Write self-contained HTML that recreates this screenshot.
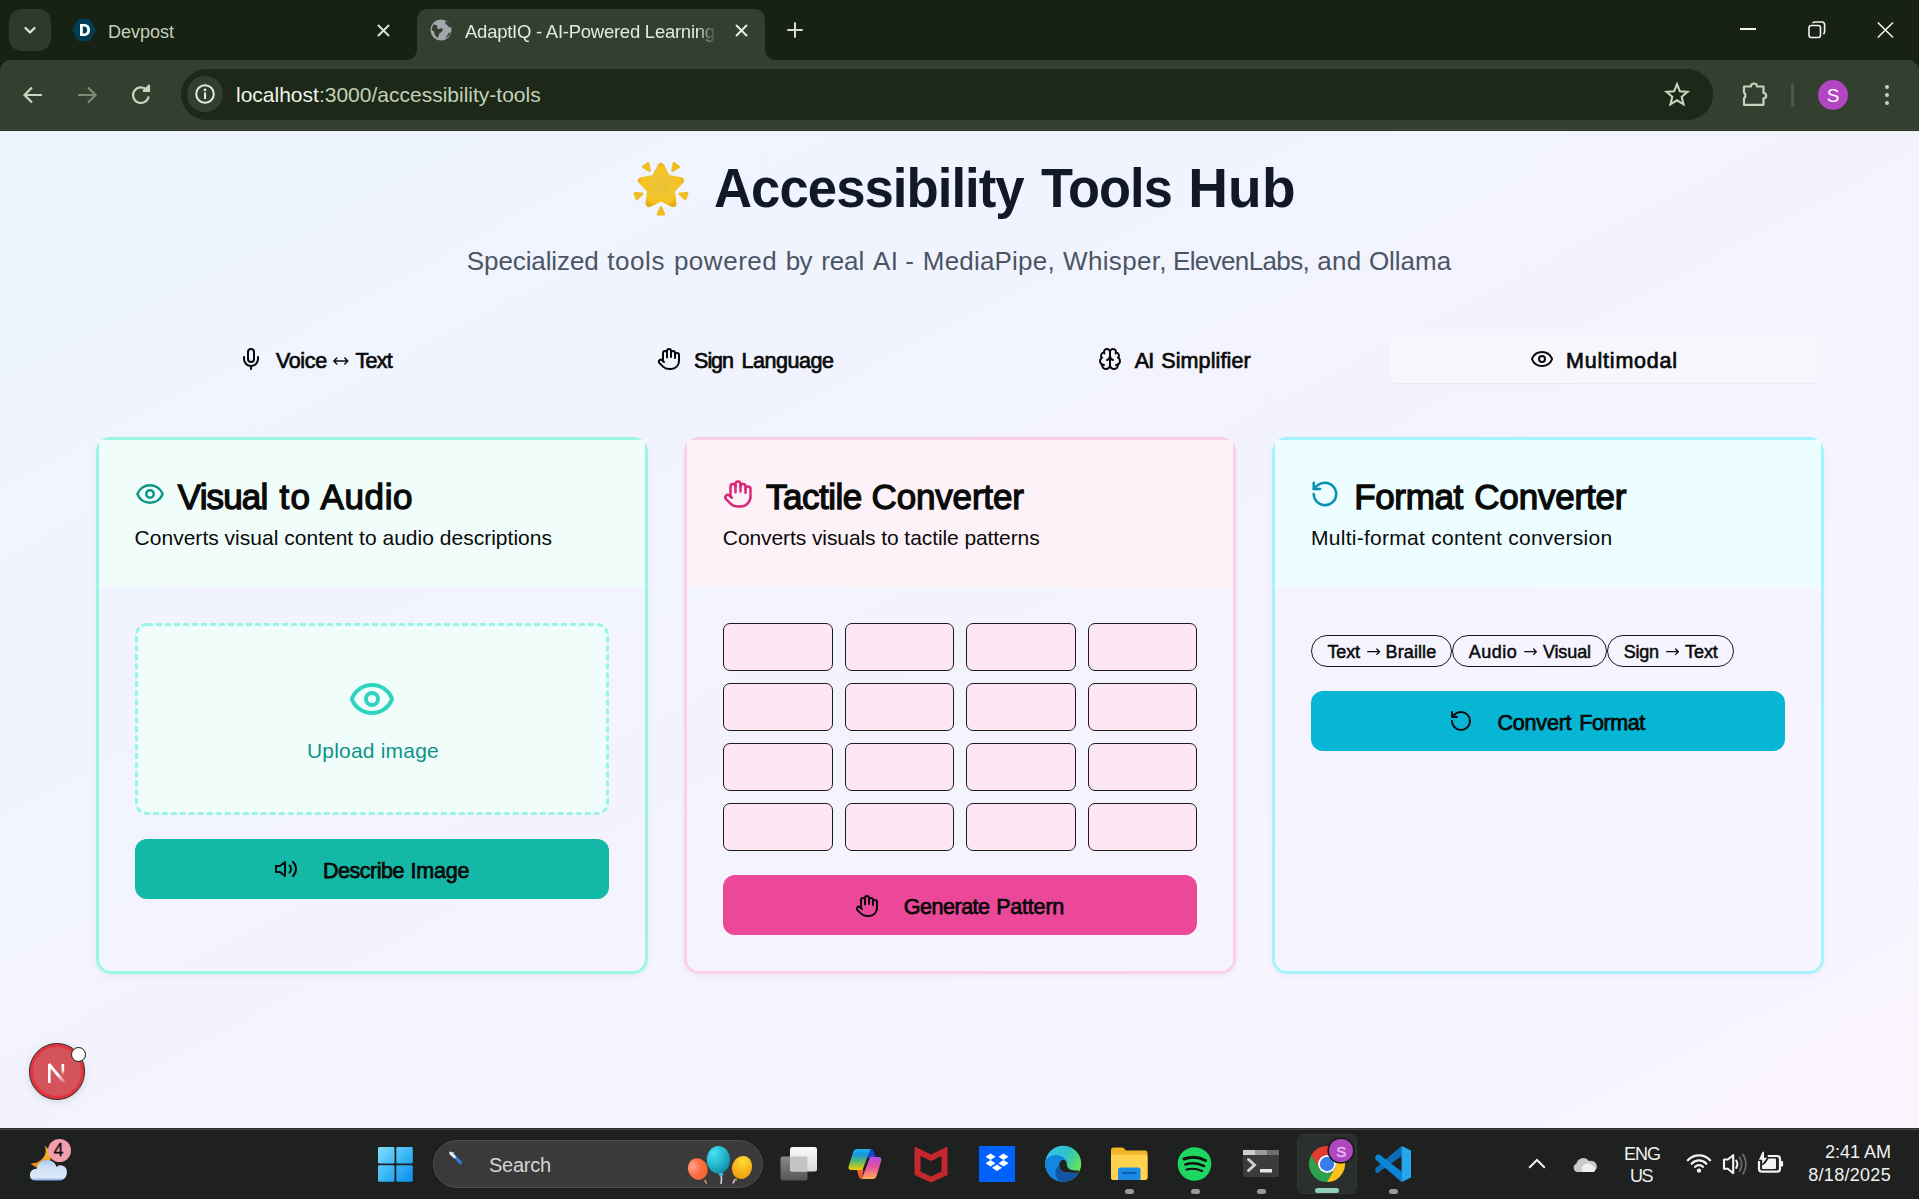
<!DOCTYPE html>
<html><head><meta charset="utf-8">
<style>
*{margin:0;padding:0;box-sizing:border-box}
html,body{width:1919px;height:1199px;overflow:hidden}
body{position:relative;font-family:"Liberation Sans",sans-serif;background:#182214}
.a{position:absolute}
.t{position:absolute;white-space:nowrap;line-height:1}
svg{position:absolute;overflow:visible}
/* chrome */
#strip{left:0;top:0;width:1919px;height:60px;background:#182214}
#toolbar{left:0;top:60px;width:1919px;height:69px;background:#333f2f;border-radius:11px 11px 0 0}
#tbline{left:0;top:129px;width:1919px;height:1px;background:#454a40}
#tbdark{left:0;top:130px;width:1919px;height:1px;background:#27301f}
#omni{left:181px;top:69px;width:1532px;height:51px;background:#1d2818;border-radius:26px}
/* content */
#page{left:0;top:131px;width:1919px;height:997px;background:linear-gradient(to bottom right,#edf5ff 0%,#f3f3fe 50%,#faf5ff 100%);overflow:hidden}
/* taskbar */
#taskbar{left:0;top:1128px;width:1919px;height:71px;background:#1f2120;border-top:1px solid #2f302f;box-shadow:inset 0 1px 0 #434443}
</style></head><body>
<div id="strip" class="a"></div>
<div id="toolbar" class="a"></div>
<div id="tbline" class="a"></div>
<div id="tbdark" class="a"></div>
<div id="omni" class="a"></div>

<!-- tab search button -->
<div class="a" style="left:9px;top:9px;width:42px;height:42px;border-radius:13px;background:#2e3a2b"></div>
<svg style="left:22px;top:22px" width="16" height="16" viewBox="0 0 16 16"><path d="M3.5 6 L8 10.5 L12.5 6" fill="none" stroke="#dfe8d9" stroke-width="2.2" stroke-linecap="round" stroke-linejoin="round"/></svg>
<!-- devpost favicon -->
<svg style="left:72px;top:19px" width="24" height="22" viewBox="0 0 24 22"><polygon points="6,0 18,0 24,11 18,22 6,22 0,11" fill="#003e54"/><path d="M8 5h4.2c3.6 0 5.8 2.3 5.8 6s-2.2 6-5.8 6H8Z M10.8 7.6v6.8h1.3c2 0 3.1-1.3 3.1-3.4s-1.1-3.4-3.1-3.4Z" fill="#fff" fill-rule="evenodd"/></svg>
<div class="t" style="left:108px;top:23px;font-size:18px;color:#c3d0b9">Devpost</div>
<svg style="left:377px;top:24px" width="13" height="13" viewBox="0 0 13 13"><path d="M1.5 1.5L11.5 11.5M11.5 1.5L1.5 11.5" stroke="#d9e3d3" stroke-width="2" stroke-linecap="round"/></svg>
<!-- active tab -->
<svg style="left:405px;top:9px" width="372" height="52" viewBox="0 0 372 52"><path d="M0 51 Q12 51 12 39 V12 Q12 0 24 0 H348 Q360 0 360 12 V39 Q360 51 372 51 Z" fill="#333f2f"/></svg>
<svg style="left:430px;top:19px" width="22" height="22" viewBox="0 0 22 22"><circle cx="11" cy="11" r="10.5" fill="#a2a6ad"/><path d="M4 5.5c2 0 3.5 1 3.2 2.8-.3 1.6 1.6 2.2 2.8 1.4 1.3-.9 2.9-.2 2.6 1.5-.3 1.7-2 2-3.2 3.3-1 1.1-.6 3-1.4 4.2-1.8-.5-3.8-2.8-3.6-4.6.2-1.6-1.3-2.3-2.6-2.8C2 8.5 2.6 6.3 4 5.5Z M15.5 2.2c-.8 1.2-.3 2.7 1 3.2 1.6.6 1.4 2.3 2.8 2.8.8.3 1.4.1 2-.3-.5-2.5-3.2-5.2-5.8-5.7Z M20.8 13.5c-1.4-.4-2.6.5-3 1.9-.4 1.5-2 2.2-2.4 3.6 2.6-.9 4.8-3 5.4-5.5Z" fill="#333f2f"/></svg>
<div class="t" style="left:465px;top:23px;font-size:18.5px;letter-spacing:-0.25px;color:#e3eadf;width:252px;overflow:hidden;-webkit-mask-image:linear-gradient(90deg,#000 232px,transparent 252px)">AdaptIQ - AI-Powered Learning Platform</div>
<svg style="left:735px;top:24px" width="13" height="13" viewBox="0 0 13 13"><path d="M1.5 1.5L11.5 11.5M11.5 1.5L1.5 11.5" stroke="#e6ede1" stroke-width="2" stroke-linecap="round"/></svg>
<svg style="left:787px;top:22px" width="16" height="16" viewBox="0 0 16 16"><path d="M8 1V15M1 8H15" stroke="#d4ddce" stroke-width="2" stroke-linecap="round"/></svg>
<!-- window controls -->
<div class="a" style="left:1740px;top:28px;width:16px;height:1.6px;background:#f2f2f2"></div>
<svg style="left:1808px;top:21px" width="18" height="18" viewBox="0 0 18 18"><rect x="1" y="4.5" width="11.5" height="12" rx="2.2" fill="none" stroke="#f2f2f2" stroke-width="1.6"/><path d="M4.5 2.2 Q5.2 1 7 1 H13.8 Q16.6 1 16.6 3.8 V10.5 Q16.6 12.3 15.4 13" fill="none" stroke="#f2f2f2" stroke-width="1.6"/></svg>
<svg style="left:1877px;top:22px" width="17" height="16" viewBox="0 0 17 16"><path d="M0.8 0.5L16 15.5M16 0.5L0.8 15.5" stroke="#f2f2f2" stroke-width="1.6"/></svg>
<!-- nav buttons -->
<svg style="left:22px;top:84px" width="22" height="22" viewBox="0 0 22 22"><path d="M20 11H3M10 3.5L2.5 11L10 18.5" fill="none" stroke="#c7d4be" stroke-width="2.2" stroke-linejoin="miter"/></svg>
<svg style="left:76px;top:84px" width="22" height="22" viewBox="0 0 22 22"><path d="M2 11H19M12 3.5L19.5 11L12 18.5" fill="none" stroke="#7e8c77" stroke-width="2.2"/></svg>
<svg style="left:130px;top:84px" width="22" height="22" viewBox="0 0 22 22"><path d="M18.6 12.3A7.8 7.8 0 1 1 16.4 5.6" fill="none" stroke="#c7d4be" stroke-width="2.2"/><path d="M12.2 6.8H19V0.2Z" fill="#c7d4be"/><path d="M19 0.8V6.8H13" fill="none" stroke="#c7d4be" stroke-width="2.2"/></svg>
<!-- info chip -->
<div class="a" style="left:187px;top:76px;width:36px;height:36px;border-radius:50%;background:#333f2f"></div>
<svg style="left:195px;top:84px" width="20" height="20" viewBox="0 0 20 20"><circle cx="10" cy="10" r="8.8" fill="none" stroke="#e3eadf" stroke-width="2"/><rect x="9" y="8.5" width="2.1" height="6.5" fill="#e3eadf"/><circle cx="10" cy="5.9" r="1.3" fill="#e3eadf"/></svg>
<div class="t" style="left:236px;top:84px;font-size:21px;color:#c3d0b9"><span style="color:#eef3ea">localhost</span>:3000/accessibility-tools</div>
<!-- right toolbar -->
<svg style="left:1664px;top:82px" width="26" height="25" viewBox="0 0 26 25"><path d="M13 2.2L15.9 9.3L23.5 9.9L17.7 14.8L19.5 22.3L13 18.3L6.5 22.3L8.3 14.8L2.5 9.9L10.1 9.3Z" fill="none" stroke="#c7d4be" stroke-width="2.1" stroke-linejoin="miter"/></svg>
<svg style="left:1740px;top:80px" width="28" height="28" viewBox="0 0 28 28"><path d="M4 6.5H11A3 3 0 0 1 17 6.5H23.5V13A2.6 2.6 0 0 1 23.5 18.3V24.8H4V18.3A3.5 3.5 0 0 0 4 12.7Z" fill="none" stroke="#c7d4be" stroke-width="2.2" stroke-linejoin="round"/></svg>
<div class="a" style="left:1791px;top:83px;width:3px;height:24px;background:#4b5a47;border-radius:1.5px"></div>
<div class="a" style="left:1818px;top:80px;width:30px;height:30px;border-radius:50%;background:#b245c1"></div>
<div class="t" style="left:1818px;top:86px;width:30px;text-align:center;font-size:19px;color:#fff">S</div>
<div class="a" style="left:1884.5px;top:84.5px;width:4.6px;height:4.6px;border-radius:50%;background:#c7d4be"></div>
<div class="a" style="left:1884.5px;top:92.5px;width:4.6px;height:4.6px;border-radius:50%;background:#c7d4be"></div>
<div class="a" style="left:1884.5px;top:100.8px;width:4.6px;height:4.6px;border-radius:50%;background:#c7d4be"></div>

<div id="page" class="a"></div>
<svg style="left:0;top:0" width="1919" height="300"><defs><radialGradient id="sg" cx="0.5" cy="0.5" r="0.6"><stop offset="0" stop-color="#e6bf3a"/><stop offset="0.55" stop-color="#f2c42e"/><stop offset="0.85" stop-color="#f5c21f"/><stop offset="1" stop-color="#e9a81a"/></radialGradient></defs><path d="M661.0 166.5 L667.3 178.3 L680.5 180.7 L671.3 190.3 L673.0 203.6 L661.0 197.8 L649.0 203.6 L650.7 190.3 L641.5 180.7 L654.7 178.3Z" fill="url(#sg)" stroke="url(#sg)" stroke-width="7" stroke-linejoin="round"/><path d="M649.5 170.6 L648.1 163.3 L643.2 166.8Z" fill="#efbd22" stroke="#efbd22" stroke-width="2.6" stroke-linejoin="round"/><path d="M672.5 170.6 L678.8 166.8 L673.9 163.3Z" fill="#efbd22" stroke="#efbd22" stroke-width="2.6" stroke-linejoin="round"/><path d="M642.2 193.8 L634.8 193.3 L636.8 199.0Z" fill="#efbd22" stroke="#efbd22" stroke-width="2.6" stroke-linejoin="round"/><path d="M679.8 193.8 L685.2 199.0 L687.2 193.3Z" fill="#efbd22" stroke="#efbd22" stroke-width="2.6" stroke-linejoin="round"/><path d="M661.0 207.5 L658.0 214.3 L664.0 214.3Z" fill="#efbd22" stroke="#efbd22" stroke-width="2.6" stroke-linejoin="round"/></svg>
<div class="t" style="left:714.0px;top:161px;font-size:55px;letter-spacing:-1.000px;font-weight:bold;color:#111827;transform:scaleX(0.958);transform-origin:0 0;">Accessibility</div>
<div class="t" style="left:1041.0px;top:161px;font-size:55px;letter-spacing:-1.000px;font-weight:bold;color:#111827;transform:scaleX(0.951);transform-origin:0 0;">Tools</div>
<div class="t" style="left:1188.2px;top:161px;font-size:55px;letter-spacing:0.217px;font-weight:bold;color:#111827;">Hub</div>
<div class="t" style="left:466.8px;top:248px;font-size:26px;letter-spacing:-0.101px;color:#4b5563;">Specialized</div>
<div class="t" style="left:607.3px;top:248px;font-size:26px;letter-spacing:0.545px;color:#4b5563;">tools</div>
<div class="t" style="left:673.9px;top:248px;font-size:26px;letter-spacing:0.521px;color:#4b5563;">powered</div>
<div class="t" style="left:785.7px;top:248px;font-size:26px;letter-spacing:-0.660px;color:#4b5563;">by</div>
<div class="t" style="left:821.2px;top:248px;font-size:26px;letter-spacing:-0.126px;color:#4b5563;">real</div>
<div class="t" style="left:873.0px;top:248px;font-size:26px;letter-spacing:0.358px;color:#4b5563;">AI</div>
<div class="t" style="left:905.2px;top:248px;font-size:26px;letter-spacing:0.000px;color:#4b5563;">-</div>
<div class="t" style="left:922.8px;top:248px;font-size:26px;letter-spacing:0.194px;color:#4b5563;">MediaPipe,</div>
<div class="t" style="left:1063.0px;top:248px;font-size:26px;letter-spacing:0.340px;color:#4b5563;">Whisper,</div>
<div class="t" style="left:1173.0px;top:248px;font-size:26px;letter-spacing:-0.638px;color:#4b5563;">ElevenLabs,</div>
<div class="t" style="left:1317.2px;top:248px;font-size:26px;letter-spacing:0.340px;color:#4b5563;">and</div>
<div class="t" style="left:1368.9px;top:248px;font-size:26px;letter-spacing:-0.019px;color:#4b5563;">Ollama</div>
<div class="a" style="left:1389px;top:335px;width:429px;height:48px;border-radius:6px;background:#f6f6fd;box-shadow:0 1px 2px rgba(0,0,0,0.05)"></div>
<svg style="left:238.7px;top:346.7px" width="24" height="24" viewBox="0 0 24 24" fill="none" stroke="#0a0a0a" stroke-width="2" stroke-linecap="round" stroke-linejoin="round"><path d="M12 2a3 3 0 0 0-3 3v7a3 3 0 0 0 6 0V5a3 3 0 0 0-3-3Z"/><path d="M19 10v2a7 7 0 0 1-14 0v-2"/><line x1="12" x2="12" y1="19" y2="22"/></svg>
<div class="t" style="left:276.0px;top:351px;font-size:21.5px;letter-spacing:-0.370px;-webkit-text-stroke:0.7px #0a0a0a;color:#0a0a0a;">Voice</div>
<svg style="left:333.0px;top:357.3px" width="15.5" height="8.0" fill="none" stroke="#0a0a0a" stroke-width="1.5" stroke-linecap="round" stroke-linejoin="round"><path d="M0.8 4.0 H14.8 M11.8 1 L14.8 4.0 L11.8 7.0 M3.8 1 L0.8 4.0 L3.8 7.0"/></svg>
<div class="t" style="left:355.5px;top:351px;font-size:21.5px;letter-spacing:-0.750px;-webkit-text-stroke:0.7px #0a0a0a;color:#0a0a0a;">Text</div>
<svg style="left:657.2px;top:347.0px" width="24" height="24" viewBox="0 0 24 24" fill="none" stroke="#0a0a0a" stroke-width="2" stroke-linecap="round" stroke-linejoin="round"><path d="M18 11V6a2 2 0 0 0-2-2a2 2 0 0 0-2 2"/><path d="M14 10V4a2 2 0 0 0-2-2a2 2 0 0 0-2 2v2"/><path d="M10 10.5V6a2 2 0 0 0-2-2a2 2 0 0 0-2 2v8"/><path d="M18 8a2 2 0 1 1 4 0v6a8 8 0 0 1-8 8h-2c-2.8 0-4.5-.86-5.99-2.34l-3.6-3.6a2 2 0 0 1 2.830-2.820L7 15"/></svg>
<div class="t" style="left:694.1px;top:351px;font-size:21.5px;letter-spacing:-1.058px;-webkit-text-stroke:0.7px #0a0a0a;color:#0a0a0a;">Sign</div>
<div class="t" style="left:741.5px;top:351px;font-size:21.5px;letter-spacing:-0.457px;-webkit-text-stroke:0.7px #0a0a0a;color:#0a0a0a;">Language</div>
<svg style="left:1098.4px;top:347.0px" width="24" height="24" viewBox="0 0 24 24" fill="none" stroke="#0a0a0a" stroke-width="2" stroke-linecap="round" stroke-linejoin="round"><path d="M12 5a3 3 0 1 0-5.997.125 4 4 0 0 0-2.526 5.77 4 4 0 0 0 .556 6.588A4 4 0 1 0 12 18Z"/><path d="M12 5a3 3 0 1 1 5.997.125 4 4 0 0 1 2.526 5.77 4 4 0 0 1-.556 6.588A4 4 0 1 1 12 18Z"/><path d="M15 13a4.5 4.5 0 0 1-3-4 4.5 4.5 0 0 1-3 4"/><path d="M17.599 6.5a3 3 0 0 0 .399-1.375"/><path d="M6.003 5.125A3 3 0 0 0 6.401 6.5"/><path d="M3.477 10.896a4 4 0 0 1 .585-.396"/><path d="M19.938 10.5a4 4 0 0 1 .585.396"/><path d="M6 18a4 4 0 0 1-1.967-.516"/><path d="M19.967 17.484A4 4 0 0 1 18 18"/></svg>
<div class="t" style="left:1134.7px;top:351px;font-size:21.5px;letter-spacing:-0.840px;-webkit-text-stroke:0.7px #0a0a0a;color:#0a0a0a;">AI</div>
<div class="t" style="left:1161.2px;top:351px;font-size:21.5px;letter-spacing:0.128px;-webkit-text-stroke:0.7px #0a0a0a;color:#0a0a0a;">Simplifier</div>
<svg style="left:1530.0px;top:347.3px" width="24" height="24" viewBox="0 0 24 24" fill="none" stroke="#0a0a0a" stroke-width="2" stroke-linecap="round" stroke-linejoin="round"><path d="M2.062 12.348a1 1 0 0 1 0-.696 10.75 10.75 0 0 1 19.876 0 1 1 0 0 1 0 .696 10.75 10.75 0 0 1-19.876 0"/><circle cx="12" cy="12" r="3"/></svg>
<div class="t" style="left:1566.0px;top:351px;font-size:21.5px;letter-spacing:0.800px;-webkit-text-stroke:0.7px #0a0a0a;color:#0a0a0a;">Multimodal</div>
<div class="a" style="left:96px;top:437px;width:552px;height:537px;border:3px solid #99f6e4;border-radius:15px;background:transparent;box-shadow:0 2px 5px rgba(60,40,90,0.05)"></div>
<div class="a" style="left:99px;top:440px;width:546px;height:147px;background:#f0fdfa"></div>
<div class="a" style="left:684px;top:437px;width:552px;height:537px;border:3px solid #fbcfe8;border-radius:15px;background:transparent;box-shadow:0 2px 5px rgba(60,40,90,0.05)"></div>
<div class="a" style="left:687px;top:440px;width:546px;height:147px;background:#fdf2f8"></div>
<div class="a" style="left:1272px;top:437px;width:552px;height:537px;border:3px solid #a5f3fc;border-radius:15px;background:transparent;box-shadow:0 2px 5px rgba(60,40,90,0.05)"></div>
<div class="a" style="left:1275px;top:440px;width:546px;height:147px;background:#ecfeff"></div>
<svg style="left:135.0px;top:479.0px" width="30" height="30" viewBox="0 0 24 24" fill="none" stroke="#0d9488" stroke-width="2" stroke-linecap="round" stroke-linejoin="round"><path d="M2.062 12.348a1 1 0 0 1 0-.696 10.75 10.75 0 0 1 19.876 0 1 1 0 0 1 0 .696 10.75 10.75 0 0 1-19.876 0"/><circle cx="12" cy="12" r="3"/></svg>
<div class="t" style="left:177.8px;top:479px;font-size:35px;letter-spacing:-0.864px;-webkit-text-stroke:1.3px #0a0a0a;color:#0a0a0a;">Visual</div>
<div class="t" style="left:279.6px;top:479px;font-size:35px;letter-spacing:1.200px;-webkit-text-stroke:1.3px #0a0a0a;color:#0a0a0a;">to</div>
<div class="t" style="left:320.4px;top:479px;font-size:35px;letter-spacing:0.662px;-webkit-text-stroke:1.3px #0a0a0a;color:#0a0a0a;">Audio</div>
<div class="t" style="left:134.6px;top:527px;font-size:21px;letter-spacing:0.015px;color:#0a0a0a;">Converts visual content to audio descriptions</div>
<svg style="left:723.3px;top:479.0px" width="30" height="30" viewBox="0 0 24 24" fill="none" stroke="#db2777" stroke-width="2" stroke-linecap="round" stroke-linejoin="round"><path d="M18 11V6a2 2 0 0 0-2-2a2 2 0 0 0-2 2"/><path d="M14 10V4a2 2 0 0 0-2-2a2 2 0 0 0-2 2v2"/><path d="M10 10.5V6a2 2 0 0 0-2-2a2 2 0 0 0-2 2v8"/><path d="M18 8a2 2 0 1 1 4 0v6a8 8 0 0 1-8 8h-2c-2.8 0-4.5-.86-5.99-2.34l-3.6-3.6a2 2 0 0 1 2.830-2.820L7 15"/></svg>
<div class="t" style="left:766.1px;top:479px;font-size:35px;letter-spacing:-0.507px;-webkit-text-stroke:1.3px #0a0a0a;color:#0a0a0a;">Tactile</div>
<div class="t" style="left:871.6px;top:479px;font-size:35px;letter-spacing:-0.177px;-webkit-text-stroke:1.3px #0a0a0a;color:#0a0a0a;">Converter</div>
<div class="t" style="left:722.8px;top:527px;font-size:21px;letter-spacing:-0.083px;color:#0a0a0a;">Converts visuals to tactile patterns</div>
<svg style="left:1310.3px;top:478.5px" width="30" height="30" viewBox="0 0 24 24" fill="none" stroke="#0891b2" stroke-width="2" stroke-linecap="round" stroke-linejoin="round"><path d="M3 12a9 9 0 1 0 9-9 9.75 9.75 0 0 0-6.74 2.74L3 8"/><path d="M3 3v5h5"/></svg>
<div class="t" style="left:1354.3px;top:479px;font-size:35px;letter-spacing:-0.384px;-webkit-text-stroke:1.3px #0a0a0a;color:#0a0a0a;">Format</div>
<div class="t" style="left:1474.3px;top:479px;font-size:35px;letter-spacing:-0.202px;-webkit-text-stroke:1.3px #0a0a0a;color:#0a0a0a;">Converter</div>
<div class="t" style="left:1311.0px;top:527px;font-size:21px;letter-spacing:0.274px;color:#0a0a0a;">Multi-format content conversion</div>
<svg style="left:135px;top:623px" width="474" height="192"><rect x="1.5" y="1.5" width="471" height="189" rx="10.5" fill="#f0fdfa" stroke="#99f6e4" stroke-width="3" stroke-dasharray="6 3"/></svg>
<svg style="left:348.0px;top:674.5px" width="48" height="48" viewBox="0 0 24 24" fill="none" stroke="#2dd4bf" stroke-width="2" stroke-linecap="round" stroke-linejoin="round"><path d="M2.062 12.348a1 1 0 0 1 0-.696 10.75 10.75 0 0 1 19.876 0 1 1 0 0 1 0 .696 10.75 10.75 0 0 1-19.876 0"/><circle cx="12" cy="12" r="3"/></svg>
<div class="t" style="left:307.0px;top:740px;font-size:21px;letter-spacing:0.191px;color:#0d9488;">Upload image</div>
<div class="a" style="left:135px;top:839px;width:474px;height:60px;border-radius:12px;background:#14b8a6"></div>
<svg style="left:274.0px;top:857.0px" width="24" height="24" viewBox="0 0 24 24" fill="none" stroke="#0a0a0a" stroke-width="2" stroke-linecap="round" stroke-linejoin="round"><polygon points="11 5 6 9 2 9 2 15 6 15 11 19 11 5"/><path d="M15.54 8.46a5 5 0 0 1 0 7.07"/><path d="M19.07 4.93a10 10 0 0 1 0 14.14"/></svg>
<div class="t" style="left:323.1px;top:861px;font-size:21.5px;letter-spacing:-0.511px;-webkit-text-stroke:0.75px #0a0a0a;color:#0a0a0a;">Describe</div>
<div class="t" style="left:410.6px;top:861px;font-size:21.5px;letter-spacing:-0.249px;-webkit-text-stroke:0.75px #0a0a0a;color:#0a0a0a;">Image</div>
<div class="a" style="left:723.0px;top:623px;width:109.5px;height:48px;border:1.5px solid #1c1c1c;border-radius:7px;background:#fce7f3"></div>
<div class="a" style="left:844.5px;top:623px;width:109.5px;height:48px;border:1.5px solid #1c1c1c;border-radius:7px;background:#fce7f3"></div>
<div class="a" style="left:966.0px;top:623px;width:109.5px;height:48px;border:1.5px solid #1c1c1c;border-radius:7px;background:#fce7f3"></div>
<div class="a" style="left:1087.5px;top:623px;width:109.5px;height:48px;border:1.5px solid #1c1c1c;border-radius:7px;background:#fce7f3"></div>
<div class="a" style="left:723.0px;top:683px;width:109.5px;height:48px;border:1.5px solid #1c1c1c;border-radius:7px;background:#fce7f3"></div>
<div class="a" style="left:844.5px;top:683px;width:109.5px;height:48px;border:1.5px solid #1c1c1c;border-radius:7px;background:#fce7f3"></div>
<div class="a" style="left:966.0px;top:683px;width:109.5px;height:48px;border:1.5px solid #1c1c1c;border-radius:7px;background:#fce7f3"></div>
<div class="a" style="left:1087.5px;top:683px;width:109.5px;height:48px;border:1.5px solid #1c1c1c;border-radius:7px;background:#fce7f3"></div>
<div class="a" style="left:723.0px;top:743px;width:109.5px;height:48px;border:1.5px solid #1c1c1c;border-radius:7px;background:#fce7f3"></div>
<div class="a" style="left:844.5px;top:743px;width:109.5px;height:48px;border:1.5px solid #1c1c1c;border-radius:7px;background:#fce7f3"></div>
<div class="a" style="left:966.0px;top:743px;width:109.5px;height:48px;border:1.5px solid #1c1c1c;border-radius:7px;background:#fce7f3"></div>
<div class="a" style="left:1087.5px;top:743px;width:109.5px;height:48px;border:1.5px solid #1c1c1c;border-radius:7px;background:#fce7f3"></div>
<div class="a" style="left:723.0px;top:803px;width:109.5px;height:48px;border:1.5px solid #1c1c1c;border-radius:7px;background:#fce7f3"></div>
<div class="a" style="left:844.5px;top:803px;width:109.5px;height:48px;border:1.5px solid #1c1c1c;border-radius:7px;background:#fce7f3"></div>
<div class="a" style="left:966.0px;top:803px;width:109.5px;height:48px;border:1.5px solid #1c1c1c;border-radius:7px;background:#fce7f3"></div>
<div class="a" style="left:1087.5px;top:803px;width:109.5px;height:48px;border:1.5px solid #1c1c1c;border-radius:7px;background:#fce7f3"></div>
<div class="a" style="left:723px;top:875px;width:474px;height:60px;border-radius:12px;background:#ec4899"></div>
<svg style="left:854.5px;top:894.0px" width="24" height="24" viewBox="0 0 24 24" fill="none" stroke="#0a0a0a" stroke-width="2" stroke-linecap="round" stroke-linejoin="round"><path d="M18 11V6a2 2 0 0 0-2-2a2 2 0 0 0-2 2"/><path d="M14 10V4a2 2 0 0 0-2-2a2 2 0 0 0-2 2v2"/><path d="M10 10.5V6a2 2 0 0 0-2-2a2 2 0 0 0-2 2v8"/><path d="M18 8a2 2 0 1 1 4 0v6a8 8 0 0 1-8 8h-2c-2.8 0-4.5-.86-5.99-2.34l-3.6-3.6a2 2 0 0 1 2.830-2.820L7 15"/></svg>
<div class="t" style="left:903.8px;top:897px;font-size:21.5px;letter-spacing:-0.484px;-webkit-text-stroke:0.75px #0a0a0a;color:#0a0a0a;">Generate</div>
<div class="t" style="left:996.2px;top:897px;font-size:21.5px;letter-spacing:-0.202px;-webkit-text-stroke:0.75px #0a0a0a;color:#0a0a0a;">Pattern</div>
<div class="a" style="left:1311px;top:635px;width:140.7px;height:32px;border:1.5px solid #1a1a1a;border-radius:16px"></div>
<div class="a" style="left:1451.7px;top:635px;width:154.9px;height:32px;border:1.5px solid #1a1a1a;border-radius:16px"></div>
<div class="a" style="left:1606.6px;top:635px;width:127.4px;height:32px;border:1.5px solid #1a1a1a;border-radius:16px"></div>
<div class="t" style="left:1327.4px;top:643px;font-size:18px;letter-spacing:-0.100px;-webkit-text-stroke:0.5px #0a0a0a;color:#0a0a0a;">Text</div>
<div class="t" style="left:1385.6px;top:643px;font-size:18px;letter-spacing:0.100px;-webkit-text-stroke:0.5px #0a0a0a;color:#0a0a0a;">Braille</div>
<div class="t" style="left:1468.7px;top:643px;font-size:18px;letter-spacing:0.500px;-webkit-text-stroke:0.5px #0a0a0a;color:#0a0a0a;">Audio</div>
<div class="t" style="left:1542.9px;top:643px;font-size:18px;letter-spacing:-0.100px;-webkit-text-stroke:0.5px #0a0a0a;color:#0a0a0a;">Visual</div>
<div class="t" style="left:1623.7px;top:643px;font-size:18px;letter-spacing:-0.200px;-webkit-text-stroke:0.5px #0a0a0a;color:#0a0a0a;">Sign</div>
<div class="t" style="left:1685.0px;top:643px;font-size:18px;letter-spacing:-0.050px;-webkit-text-stroke:0.5px #0a0a0a;color:#0a0a0a;">Text</div>
<svg style="left:1366.9px;top:648.3px" width="13.2" height="7.4" fill="none" stroke="#0a0a0a" stroke-width="1.3" stroke-linecap="round" stroke-linejoin="round"><path d="M0.7 3.7 H12.5 M9.8 1 L12.5 3.7 L9.8 6.4"/></svg>
<svg style="left:1524.0px;top:648.3px" width="13.0" height="7.4" fill="none" stroke="#0a0a0a" stroke-width="1.3" stroke-linecap="round" stroke-linejoin="round"><path d="M0.7 3.7 H12.3 M9.7 1 L12.3 3.7 L9.7 6.4"/></svg>
<svg style="left:1665.8px;top:648.3px" width="13.0" height="7.4" fill="none" stroke="#0a0a0a" stroke-width="1.3" stroke-linecap="round" stroke-linejoin="round"><path d="M0.7 3.7 H12.3 M9.7 1 L12.3 3.7 L9.7 6.4"/></svg>
<div class="a" style="left:1311px;top:691px;width:474px;height:60px;border-radius:12px;background:#06b6d4"></div>
<svg style="left:1449.0px;top:709.0px" width="24" height="24" viewBox="0 0 24 24" fill="none" stroke="#0a0a0a" stroke-width="2" stroke-linecap="round" stroke-linejoin="round"><path d="M3 12a9 9 0 1 0 9-9 9.75 9.75 0 0 0-6.74 2.74L3 8"/><path d="M3 3v5h5"/></svg>
<div class="t" style="left:1497.5px;top:713px;font-size:21.5px;letter-spacing:-0.201px;-webkit-text-stroke:0.75px #0a0a0a;color:#0a0a0a;">Convert</div>
<div class="t" style="left:1579.3px;top:713px;font-size:21.5px;letter-spacing:-0.443px;-webkit-text-stroke:0.75px #0a0a0a;color:#0a0a0a;">Format</div>
<div class="a" style="left:28.7px;top:1043px;width:56.6px;height:56.6px;border-radius:50%;background:#d5535a;border:1.5px solid #2a2a2a;box-shadow:inset 0 0 0 3px #e0353f,0 2px 8px rgba(0,0,0,0.12)"></div>
<svg style="left:47px;top:1063px" width="19" height="21" viewBox="0 0 19 21"><defs><linearGradient id="ng" x1="0" y1="0" x2="0" y2="1"><stop offset="0.55" stop-color="#fff"/><stop offset="1" stop-color="#fff" stop-opacity="0"/></linearGradient></defs><rect x="1" y="1" width="2.6" height="19" fill="#fff"/><path d="M1.8 1L18 20.5" stroke="url(#ng)" stroke-width="2.8"/><rect x="14.6" y="1" width="2.6" height="11" fill="url(#ng)"/></svg>
<div class="a" style="left:70.5px;top:1046.5px;width:15px;height:15px;border-radius:50%;background:#fff;border:1.5px solid #111"></div>
<div id="taskbar" class="a"></div>
<svg style="left:28px;top:1136px" width="44" height="48" viewBox="0 0 44 48">
<defs><linearGradient id="cl" x1="0" y1="0" x2="0" y2="1"><stop offset="0" stop-color="#a8c8f4"/><stop offset="0.35" stop-color="#cfe0f6"/><stop offset="0.85" stop-color="#dce9fa"/><stop offset="1" stop-color="#7fa6e8"/></linearGradient>
<linearGradient id="mn" x1="1" y1="0" x2="0" y2="1"><stop offset="0" stop-color="#f2c13a"/><stop offset="1" stop-color="#f07f14"/></linearGradient></defs>
<path d="M16.5 9.5 C19 14 18 22 10 26 C8 27 5 27.5 2.5 27 C6 32 13 33 18 30 C24 26 25 16 16.5 9.5Z" fill="url(#mn)"/>
<path d="M7 44.5 C3 44.5 1.8 41 2 38.5 C2.2 35 5 32.5 8.5 33 C9.5 27 14 24 19 24 C24 24 27.5 27 28.5 31 C30 29.5 32 29 34 29.5 C37.5 30.3 39.5 33.5 38.8 37.5 C38.3 41.5 35.5 44.5 31.5 44.5Z" fill="url(#cl)"/>
</svg>
<div class="a" style="left:47.5px;top:1139px;width:23px;height:23px;border-radius:50%;background:#f4a0aa"></div>
<div class="t" style="left:53.5px;top:1141px;font-size:18px;letter-spacing:0.000px;color:#111;-webkit-text-stroke:0.3px #111">4</div>
<svg style="left:378px;top:1147px" width="35" height="35" viewBox="0 0 35 35">
<defs><linearGradient id="wl" gradientUnits="userSpaceOnUse" x1="0" y1="0" x2="35" y2="35"><stop offset="0" stop-color="#86dcfc"/><stop offset="0.5" stop-color="#3cb8f6"/><stop offset="1" stop-color="#0a8ceb"/></linearGradient></defs>
<rect x="0" y="0" width="16.5" height="16.5" rx="1.2" fill="url(#wl)"/><rect x="18.3" y="0" width="16.5" height="16.5" rx="1.2" fill="url(#wl)"/>
<rect x="0" y="18.3" width="16.5" height="16.5" rx="1.2" fill="url(#wl)"/><rect x="18.3" y="18.3" width="16.5" height="16.5" rx="1.2" fill="url(#wl)"/></svg>
<div class="a" style="left:433px;top:1140px;width:330px;height:48px;border-radius:24px;background:#393a39;border:1px solid #4c4d4c"></div>
<svg style="left:449px;top:1151px" width="13" height="14" viewBox="0 0 13 14"><path d="M1 2.5 L4.5 0.8 L5.5 3.2Z" fill="#e8e8e8"/><path d="M4 3.5 L11.5 11.8" stroke="#2f7fd8" stroke-width="3.2" stroke-linecap="round"/><path d="M1.5 2 L5.5 6" stroke="#f2f2f2" stroke-width="2.6" stroke-linecap="round"/></svg>
<div class="t" style="left:489.0px;top:1154.7px;font-size:20px;letter-spacing:-0.249px;color:#d6d6d6;">Search</div>
<svg style="left:680px;top:1140px" width="80" height="50" viewBox="0 0 80 50">
<defs><radialGradient id="bo" cx="0.3" cy="0.3" r="0.8"><stop offset="0" stop-color="#ffa48f"/><stop offset="0.5" stop-color="#ff6e45"/><stop offset="1" stop-color="#f0662e"/></radialGradient>
<radialGradient id="bb" cx="0.3" cy="0.25" r="0.85"><stop offset="0" stop-color="#46e2f5"/><stop offset="0.6" stop-color="#22b3c9"/><stop offset="1" stop-color="#1087a8"/></radialGradient>
<radialGradient id="by" cx="0.45" cy="0.25" r="0.8"><stop offset="0" stop-color="#ffdc30"/><stop offset="0.6" stop-color="#f5b21c"/><stop offset="1" stop-color="#e99d14"/></radialGradient></defs>
<path d="M25 40 L26.5 43.5" stroke="#d8d0ea" stroke-width="1.2"/>
<ellipse cx="17.8" cy="29" rx="9.8" ry="11" fill="url(#bo)" transform="rotate(-22 17.8 29)"/>
<path d="M23.5 39.5 L26.5 41.5 L25 42.5Z" fill="#f06a2c"/>
<path d="M41.2 35 Q42 39 41 43.8" stroke="#d8d0ea" stroke-width="1.6" fill="none"/>
<ellipse cx="38.4" cy="19.7" rx="11.6" ry="13.8" fill="url(#bb)"/>
<rect x="38.6" y="33" width="4.8" height="2.5" rx="1" fill="#36b6d6"/>
<path d="M54.5 40 L53 43.5" stroke="#d8d0ea" stroke-width="1.6"/>
<ellipse cx="62" cy="27.4" rx="10" ry="11.6" fill="url(#by)" transform="rotate(18 62 27.4)"/>
<path d="M53.5 39 L57 38.5 L56.5 41Z" fill="#f2b01c"/>
</svg>
<svg style="left:780px;top:1147px" width="38" height="34" viewBox="0 0 38 34">
<defs><linearGradient id="tv1" x1="0" y1="0" x2="0" y2="1"><stop offset="0" stop-color="#fafafa"/><stop offset="1" stop-color="#d9d9d9"/></linearGradient>
<linearGradient id="tv2" x1="0" y1="0" x2="0" y2="1"><stop offset="0" stop-color="#8a8a8a"/><stop offset="1" stop-color="#555"/></linearGradient></defs>
<rect x="0.5" y="9.5" width="27" height="24" rx="2.5" fill="url(#tv2)"/>
<rect x="10" y="0" width="27" height="24.5" rx="2.5" fill="url(#tv1)"/>
<rect x="10" y="9.5" width="17.5" height="15" rx="1" fill="#c4c4c4"/>
</svg>
<svg style="left:840px;top:1140px" width="50" height="48" viewBox="0 0 50 48">
<defs><linearGradient id="cpa" x1="0" y1="0" x2="0" y2="1"><stop offset="0" stop-color="#27b3f6"/><stop offset="0.25" stop-color="#1196e0"/><stop offset="0.6" stop-color="#58bb6a"/><stop offset="1" stop-color="#fbcc00"/></linearGradient>
<linearGradient id="cpb" x1="0" y1="0" x2="0" y2="1"><stop offset="0" stop-color="#b14ee6"/><stop offset="0.45" stop-color="#ea4f9a"/><stop offset="1" stop-color="#fdae5c"/></linearGradient></defs>
<path d="M26 9 H31 Q33 9 33.8 12 L35.5 17.5 H28Z" fill="#1747cf"/>
<path d="M17 30 H23.5 L22 39 Q19.5 39 18.6 36Z" fill="#f2583a"/>
<path d="M17 9 H30.5 L22.5 30 H11.5 Q7.8 30 8.6 26.5 L13 12.5 Q14 9 17 9Z" fill="url(#cpa)"/>
<path d="M30 17 H38.5 Q42 17 41.2 20.5 L36.8 35.5 Q35.8 39 32.5 39 H21.8Z" fill="url(#cpb)"/>
</svg>
<svg style="left:914px;top:1146px" width="34" height="37" viewBox="0 0 34 37"><path d="M0.5 0.5 L17 8.5 L33.5 0.5 V29 L17 36.5 L0.5 29Z M6.5 10 V25.5 L17 30.5 L27.5 25.5 V10 L17 15Z" fill="#c5282c" fill-rule="evenodd"/></svg>
<svg style="left:979px;top:1146px" width="36" height="36" viewBox="0 0 36 36"><rect width="36" height="36" fill="#0061fe"/>
<path d="M11.5 7.5 L6.5 10.8 L11.5 14 L16.5 10.8Z M24.5 7.5 L19.5 10.8 L24.5 14 L29.5 10.8Z M11.5 14 L6.5 17.2 L11.5 20.5 L16.5 17.2Z M24.5 14 L19.5 17.2 L24.5 20.5 L29.5 17.2Z M18 18.5 L13 21.8 L18 25 L23 21.8Z" fill="#fff"/></svg>
<svg style="left:1040px;top:1140px" width="50" height="48" viewBox="0 0 50 48">
<defs><linearGradient id="eda" x1="0" y1="0" x2="1" y2="0.6"><stop offset="0" stop-color="#38c6f2"/><stop offset="0.55" stop-color="#2ec2c4"/><stop offset="1" stop-color="#6ae64e"/></linearGradient></defs>
<circle cx="23.2" cy="23.7" r="18" fill="url(#eda)"/>
<path d="M5.2 23.7 C5.2 18.5 9.5 15 15.5 15 C20.5 15 24.5 17.3 26.2 20.8 L26.8 24 C25 21 20 21 19.2 25 C18.8 30 22 32.3 27 32.6 C31 32.8 35.5 32.5 38.6 32.8 C35.4 38.5 29.8 41.7 23.2 41.7 C13.3 41.7 5.2 33.6 5.2 23.7Z" fill="#1387df"/>
<path d="M19.2 25 C18.8 30 22 32.3 27 32.6 C31 32.8 35.5 32.5 38.6 32.8 C35.4 38.5 29.8 41.7 23.2 41.7 C18.5 41.7 15.5 38 15.5 32.5 C15.5 29 17 26.5 19.2 25Z" fill="#0f56a6"/>
<path d="M19.2 25.2 C19.2 22 21 20 23.3 20 C25.5 20 26.8 21.8 26.8 24.2 C26.8 26.8 28.5 29.2 31.5 30.1 C34 30.8 36.5 30.6 38.8 30.2 L38.6 32.8 C35.5 32.5 31 32.8 27 32.6 C22 32.3 19.2 29.5 19.2 25.2Z" fill="#1f2120"/>
</svg>
<svg style="left:1111px;top:1147px" width="37" height="34" viewBox="0 0 37 34">
<path d="M0 3 Q0 0.5 2.5 0.5 H12 L15 3.5 H34 Q36.5 3.5 36.5 6 V30 Q36.5 33 34 33 H2.5 Q0 33 0 30Z" fill="#f0b429"/>
<path d="M0 7.5 H34 Q36.5 7.5 36.5 10 V30 Q36.5 33 34 33 H2.5 Q0 33 0 30Z" fill="#ffd24f"/>
<path d="M7 33 V23 Q7 20.5 9.5 20.5 H27 Q29.5 20.5 29.5 23 V33Z" fill="#1a8ce8"/>
<rect x="11" y="25" width="14.5" height="2" fill="#0b5fb0"/>
</svg>
<svg style="left:1177px;top:1147px" width="35" height="34" viewBox="0 0 35 34"><circle cx="17.5" cy="17" r="16.8" fill="#1ed760"/>
<path d="M7 12 Q18 8 28.5 13.5" stroke="#121212" stroke-width="3" fill="none" stroke-linecap="round"/>
<path d="M8.5 17.5 Q18 14.5 27 19" stroke="#121212" stroke-width="2.6" fill="none" stroke-linecap="round"/>
<path d="M9.5 22.5 Q17.5 20.5 25 24" stroke="#121212" stroke-width="2.2" fill="none" stroke-linecap="round"/></svg>
<svg style="left:1243px;top:1150px" width="36" height="27" viewBox="0 0 36 27"><rect width="36" height="27" rx="1.8" fill="#3b3b3b"/>
<rect width="12" height="5" fill="#cfcfcf"/><rect x="12" width="12" height="5" fill="#9a9a9a"/><rect x="24" width="12" height="5" fill="#6e6e6e"/>
<path d="M5.5 9.5 L11.5 15 L5.5 20.5" stroke="#d0d0d0" stroke-width="3" fill="none" stroke-linecap="round"/><rect x="17" y="19" width="12" height="3.5" fill="#e5e5e5"/></svg>
<div class="a" style="left:1297px;top:1134px;width:60px;height:60px;border-radius:7px;background:#2a2f2d;border:1px solid #333836"></div>
<svg style="left:1309px;top:1146px" width="36" height="36" viewBox="0 0 36 36">
<path d="M2.41 9 A18 18 0 0 1 33.59 9 L18 9 A9 9 0 0 0 10.21 22.5 Z" fill="#e33b2e"/>
<path d="M2.41 9 A18 18 0 0 0 18 36 L25.79 22.5 A9 9 0 0 1 10.21 22.5 Z" fill="#2ba24b"/>
<path d="M18 36 A18 18 0 0 0 33.59 9 L18 9 A9 9 0 0 1 25.79 22.5 Z" fill="#fbc21b"/>
<circle cx="18" cy="18" r="9" fill="#fff"/><circle cx="18" cy="18" r="7.2" fill="#3b7de6"/></svg>
<div class="a" style="left:1329.4px;top:1138.9px;width:23.6px;height:23.6px;border-radius:50%;background:#ae46c0;box-shadow:0 0 0 1.6px #161816"></div>
<div class="t" style="left:1336.2px;top:1144px;font-size:15px;letter-spacing:0.000px;color:#e6b8ee;-webkit-text-stroke:0.6px #e6b8ee">S</div>
<div class="a" style="left:1315px;top:1188px;width:24px;height:5px;border-radius:3px;background:#8fd0b5"></div>
<svg style="left:1368px;top:1140px" width="50" height="48" viewBox="0 0 50 48">
<path d="M33.6 6 V16 L10 32.8 Q7.2 33.5 7.2 30.5 Q7 28.5 8.5 27.3Z" fill="#0a6fb8"/>
<path d="M8.8 14.8 Q10.5 14 12 15 L33.6 31.5 V42 L8 20 Q6.6 18.5 7.2 16.8Z" fill="#0a86d6"/>
<path d="M33.6 6 L43 10.5 V37.5 L33.6 42Z" fill="#24a9f1"/>
</svg>
<div class="a" style="left:1124.5px;top:1188.5px;width:9px;height:5px;border-radius:3px;background:#9a9a9a"></div>
<div class="a" style="left:1191.0px;top:1188.5px;width:9px;height:5px;border-radius:3px;background:#9a9a9a"></div>
<div class="a" style="left:1256.5px;top:1188.5px;width:9px;height:5px;border-radius:3px;background:#9a9a9a"></div>
<div class="a" style="left:1388.5px;top:1188.5px;width:9px;height:5px;border-radius:3px;background:#9a9a9a"></div>
<svg style="left:1528px;top:1158px" width="18" height="11" viewBox="0 0 18 11"><path d="M1.2 9.8 L9 2 L16.8 9.8" stroke="#f0f0f0" stroke-width="2" fill="none"/></svg>
<svg style="left:1572px;top:1155px" width="26" height="18" viewBox="0 0 26 18"><path d="M5 17 A4.5 4.5 0 0 1 4.5 8.5 A7 7 0 0 1 17 6 A5.5 5.5 0 0 1 21 17Z" fill="#c9c9c9"/><path d="M10 17 Q8 11 13 9 Q18 7 20.5 11 A3.5 3.5 0 0 1 22 17Z" fill="#eeeeee"/></svg>
<div class="t" style="left:1624.0px;top:1144.8px;font-size:18px;letter-spacing:-1.000px;color:#f0f0f0;">ENG</div>
<div class="t" style="left:1630.0px;top:1166.5px;font-size:18px;letter-spacing:-1.500px;color:#f0f0f0;">US</div>
<svg style="left:1680px;top:1150px" width="40" height="26" viewBox="0 0 40 26">
<path d="M7.85 10.26 A15 15 0 0 1 30.15 10.26" stroke="#f4f4f4" stroke-width="2.3" fill="none" stroke-linecap="round"/>
<path d="M11.64 13.68 A9.9 9.9 0 0 1 26.36 13.68" stroke="#f4f4f4" stroke-width="2.3" fill="none" stroke-linecap="round"/>
<path d="M15.14 16.82 A5.2 5.2 0 0 1 22.86 16.82" stroke="#f4f4f4" stroke-width="2.3" fill="none" stroke-linecap="round"/>
<circle cx="19" cy="20.6" r="2.2" fill="#f4f4f4"/></svg>
<svg style="left:1720px;top:1150px" width="32" height="28" viewBox="0 0 32 28">
<path d="M4 9.5 H7.8 L13.2 5.2 V23.2 L7.8 18.8 H4 Z" stroke="#f4f4f4" stroke-width="2.1" fill="none" stroke-linejoin="round"/>
<path d="M16.2 10.5 Q18.6 14.2 16.2 17.9" stroke="#f4f4f4" stroke-width="2" fill="none" stroke-linecap="round"/>
<path d="M19.6 7.3 Q23.8 14.2 19.6 21.1" stroke="#6a6a6a" stroke-width="1.8" fill="none" stroke-linecap="round"/>
<path d="M23 4.5 Q29 14.2 23 23.9" stroke="#6a6a6a" stroke-width="1.8" fill="none" stroke-linecap="round"/>
</svg>
<svg style="left:1750px;top:1145px" width="45" height="35" viewBox="0 0 45 35">
<path d="M17.8 11 H27 Q30 11 30 14 V23.7 Q30 26.7 27 26.7 H12 Q9 26.7 9 23.7 V16" fill="none" stroke="#f4f4f4" stroke-width="2.2"/>
<rect x="30.5" y="16" width="2.6" height="5.6" rx="0.8" fill="#f4f4f4"/>
<path d="M18.5 13.6 H25 Q26 13.6 26 14.6 V23 Q26 24 25 24 H13 Q12 24 12 23 V20.2 Q14.8 19.8 16 17.5Z" fill="#f4f4f4"/>
<path d="M12.6 6.7 H14 V12.8 H17 L12.2 19.2 V14.8 H8.9Z" fill="#f4f4f4"/>
</svg>
<div class="t" style="left:1780px;top:1142.5px;width:111px;text-align:right;font-size:18px;color:#f0f0f0">2:41 AM</div>
<div class="t" style="left:1780px;top:1166px;width:111px;text-align:right;font-size:18px;letter-spacing:0.3px;color:#f0f0f0">8/18/2025</div>

</body></html>
